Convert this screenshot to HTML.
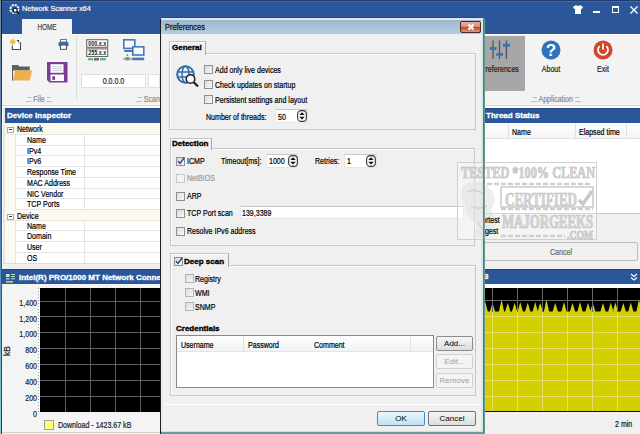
<!DOCTYPE html>
<html><head><meta charset="utf-8">
<style>
*{margin:0;padding:0;box-sizing:border-box}
html,body{width:640px;height:434px;overflow:hidden;background:#f0f0f0;font-family:"Liberation Sans",sans-serif;font-size:8px;color:#000;letter-spacing:0}
.a{position:absolute}
.t{position:absolute;white-space:nowrap;line-height:10px;font-size:8.5px;transform:scaleX(.83);transform-origin:0 0;-webkit-text-stroke:0.2px currentColor}
.c{transform-origin:50% 0}
.b{font-weight:bold}
.hdr{position:absolute;background:linear-gradient(#21457e 0 1px,#2b579a 1px);color:#fff;font-weight:bold;font-size:8px;white-space:nowrap;overflow:hidden;-webkit-text-stroke:0.3px #fff}
.cb{position:absolute;width:9px;height:9px;border:1px solid #8f8f8f;background:linear-gradient(135deg,#dcdcdc,#f7f7f7)}
.row{position:absolute;height:11px;border-bottom:1px solid #e3e3e3}
.btn{position:absolute;border:1px solid #a6a6a6;border-radius:2px;background:linear-gradient(#f6f6f6,#dddddd);text-align:center;line-height:13px}
.grp{position:absolute;border:1px solid #c8c8c8;box-shadow:1px 1px 0 #fff inset}
.tab{position:absolute;border:1px solid #c4c4c4;border-right-color:#a8a8a8;border-bottom:none;background:#f0f0f0;font-weight:bold;font-size:8px;box-shadow:inset 1px 1px 0 #fff;white-space:nowrap;-webkit-text-stroke:0.35px #000}
</style></head><body>

<!-- left app border -->
<div class="a" style="left:0;top:0;width:1px;height:434px;background:linear-gradient(#7d8a9a,#4a7ab0 50%,#8fd0da)"></div><div class="a" style="left:1px;top:0;width:1px;height:434px;background:linear-gradient(#121a3a,#2d5d9d 50%,#1c4650)"></div><div class="a" style="left:2px;top:35px;width:1px;height:399px;background:#fff"></div>

<!-- Title bar -->
<div class="a" style="left:2px;top:0;width:638px;height:34px;background:#2b579a"></div><div class="a" style="left:2px;top:0;width:638px;height:1px;background:#1f3a6e"></div><div class="a" style="left:2px;top:1px;width:638px;height:1px;background:#46679e"></div><div class="a" style="left:2px;top:6px;width:638px;height:1px;background:#2d5ba3"></div>
<div class="a" style="left:2px;top:34px;width:638px;height:1px;background:#fff"></div>
<svg class="a" style="left:9px;top:3px" width="12" height="12" viewBox="0 0 12 12"><circle cx="5.4" cy="6" r="4" fill="none" stroke="#e8f2ff" stroke-width="2" stroke-dasharray="2.2 0.9"/><circle cx="6.2" cy="7.3" r="2" fill="#fff" stroke="#111" stroke-width="1.1"/><line x1="7.7" y1="8.8" x2="10.5" y2="11" stroke="#111" stroke-width="1.3"/></svg>
<div class="t" style="left:22px;top:4px;color:#fff;font-size:8px;transform:scaleX(.9)">Network Scanner x64</div>
<!-- tshirt -->
<svg class="a" style="left:573px;top:5px" width="10" height="9" viewBox="0 0 10 9"><path d="M3 0 L0 2 L1 4 L2 3.5 L2 9 L8 9 L8 3.5 L9 4 L10 2 L7 0 Q5 2 3 0Z" fill="#fff"/></svg>
<div class="a" style="left:593px;top:11px;width:7px;height:2px;background:#fff"></div>
<div class="a" style="left:612px;top:6px;width:7px;height:7px;border:1px solid #fff;border-top-width:2px"></div>
<svg class="a" style="left:630px;top:6px" width="8" height="8" viewBox="0 0 8 8"><path d="M0.5 0.5L7.5 7.5M7.5 0.5L0.5 7.5" stroke="#fff" stroke-width="1.3"/></svg>

<!-- HOME tab -->
<div class="a" style="left:22px;top:19px;width:50px;height:16px;background:#f3f3f3"></div>
<div class="t c" style="left:22px;top:22px;width:50px;text-align:center;color:#444;transform:scaleX(.75)">HOME</div>

<!-- Ribbon -->
<div class="a" style="left:2px;top:35px;width:638px;height:71px;background:#f3f3f3;border-bottom:1px solid #d6d6d6"></div>
<div class="a" style="left:2px;top:106px;width:638px;height:2px;background:#fcfcfc"></div>
<div class="a" style="left:76px;top:36px;width:1px;height:64px;background:#dcdcdc"></div>
<div class="a" style="left:484px;top:36px;width:1px;height:64px;background:#dcdcdc"></div>

<!-- File group icons -->
<svg class="a" style="left:9px;top:38px" width="14" height="13" viewBox="0 0 14 13"><rect x="3.3" y="3" width="8.2" height="8.5" fill="#fff"/><path d="M3.3 7.5V11.5H11.5V4.2" fill="none" stroke="#4a4a4a" stroke-width="1.1"/><path d="M7.6 2h2.4v2.4Z" fill="#333"/><path d="M9 3.2l1.3 1.3" stroke="#333" stroke-width="1"/><circle cx="3.8" cy="3.8" r="2.6" fill="#f2c55a" opacity="0.9"/><path d="M1 3.8h5.6M3.8 1v5.6" stroke="#f7b733" stroke-width="1"/></svg>
<svg class="a" style="left:58px;top:39px" width="11" height="11" viewBox="0 0 11 11"><rect x="2.5" y="0.5" width="6" height="2.5" fill="#fff" stroke="#3f6fb0" stroke-width="0.9"/><rect x="0.5" y="3" width="10" height="4.2" rx="0.8" fill="#3f6fb0"/><rect x="2.5" y="6" width="6" height="4.3" fill="#fff" stroke="#444" stroke-width="0.9"/></svg>
<svg class="a" style="left:12px;top:64px" width="21" height="17" viewBox="0 0 21 17"><path d="M0.3 1 L6 1 L7.5 2.5 L17.8 2.5 L17.8 6.5 L0.3 6.5Z" fill="#606060"/><path d="M0.3 1 L0.3 16.5" stroke="#606060" stroke-width="1.6"/><path d="M3.2 6.5 L20.2 6.5 L17.6 16.5 L1 16.5Z" fill="#efb04a"/></svg>
<svg class="a" style="left:47px;top:62px" width="21" height="21" viewBox="0 0 21 21"><path d="M0 0 L20.5 0 L20.5 20.5 L2.5 20.5 L0 18Z" fill="#7b3c98"/><rect x="3.5" y="2.2" width="13" height="8.6" fill="#fff"/><path d="M5 4.6h10M5 6.6h10M5 8.6h10" stroke="#b9c3cf" stroke-width="0.8"/><rect x="3.5" y="12.5" width="13.5" height="6.5" fill="#fff"/><rect x="5.3" y="14.3" width="2.8" height="3.6" fill="#7b3c98"/></svg>
<div class="t c" style="left:18px;top:94px;width:42px;text-align:center;color:#8a8a8a">.:: File ::.</div>

<!-- Scan group -->
<svg class="a" style="left:86px;top:39px" width="23" height="22" viewBox="0 0 23 22"><rect x="0.7" y="0.7" width="21" height="7.6" fill="#fff" stroke="#6a6a6a" stroke-width="1.1"/><rect x="0.7" y="9.9" width="21" height="7.6" fill="#fff" stroke="#6a6a6a" stroke-width="1.1"/><text x="11.2" y="6.9" font-size="7" text-anchor="middle" font-family="Liberation Sans" font-weight="bold" fill="#222" textLength="18" lengthAdjust="spacingAndGlyphs">000.x.x</text><text x="11.2" y="16.1" font-size="7" text-anchor="middle" font-family="Liberation Sans" font-weight="bold" fill="#222" textLength="18" lengthAdjust="spacingAndGlyphs">255.x.x</text><path d="M2 20.2h5M14 20.2h6" stroke="#4cae7e" stroke-width="2"/><rect x="8" y="19" width="5" height="2.5" fill="#666"/></svg>
<svg class="a" style="left:122px;top:38px" width="24" height="24" viewBox="0 0 24 24"><rect x="1.8" y="1.8" width="11" height="8.6" fill="#f7faff" stroke="#4877b2" stroke-width="1.6"/><rect x="2.2" y="12" width="10.2" height="2" fill="#4877b2"/><rect x="10.8" y="8.8" width="11" height="8.2" fill="#f7faff" stroke="#4877b2" stroke-width="1.6"/><rect x="10.2" y="19.6" width="12" height="2.6" fill="#4877b2"/><path d="M1 21h9" stroke="#6f9a66" stroke-width="1"/><rect x="3.3" y="19" width="4.2" height="3.4" fill="#7d9770"/><circle cx="5.3" cy="17" r="0.9" fill="#6f9a66"/></svg>
<div class="a" style="left:81px;top:74px;width:65px;height:14px;background:#fff;border:1px solid #e0e0e0"></div>
<div class="t c" style="left:81px;top:76px;width:65px;text-align:center;color:#1a1a1a;-webkit-text-stroke:0.2px #1a1a1a">0.0.0.0</div>
<div class="a" style="left:148px;top:74px;width:12px;height:14px;background:#fff;border:1px solid #e0e0e0"></div>
<div class="t" style="left:136px;top:94px;color:#8a8a8a">.:: Scan</div>

<!-- Application group -->
<div class="a" style="left:485px;top:36px;width:40px;height:55px;background:#a7a7a7"></div>
<svg class="a" style="left:486px;top:40px" width="26" height="20" viewBox="0 0 26 20"><path d="M7 0.5v18.5M13.5 0.5v18.5M20.4 0.5v18.5" stroke="#4f5560" stroke-width="1.3"/><rect x="3.8" y="7" width="6.6" height="3" fill="#3a74b8"/><rect x="10.2" y="13" width="6.8" height="2.8" fill="#3a74b8"/><rect x="17" y="3.7" width="7" height="3" fill="#3a74b8"/></svg>
<div class="t" style="right:121px;top:64px;color:#222;transform-origin:100% 0">Preferences</div>
<svg class="a" style="left:541px;top:40px" width="20" height="20" viewBox="0 0 20 20"><circle cx="10" cy="10" r="9.5" fill="#2f73b8"/><text x="10" y="16" font-size="17" font-weight="bold" text-anchor="middle" font-family="Liberation Sans" fill="#fff">?</text></svg>
<div class="t c" style="left:536px;top:64px;width:30px;text-align:center;color:#222">About</div>
<svg class="a" style="left:593px;top:40px" width="20" height="20" viewBox="0 0 20 20"><circle cx="10" cy="10" r="9.5" fill="#d1472a"/><path d="M6.6 6.2 A5 5 0 1 0 13.4 6.2" fill="none" stroke="#fff" stroke-width="1.8"/><path d="M10 3.5v6" stroke="#fff" stroke-width="1.8"/></svg>
<div class="t c" style="left:588px;top:64px;width:30px;text-align:center;color:#222">Exit</div>
<div class="t" style="left:531px;top:94px;color:#8a8a8a">.:: Application ::.</div>


<!-- Device Inspector -->
<div class="a" style="left:3px;top:108px;width:158px;height:158px;background:#fff;border-left:2px solid #e6e6e6"></div>
<div class="hdr" style="left:5px;top:108px;width:156px;height:15px;line-height:15px;padding-left:2px">Device Inspector</div>
<div class="a" style="left:5px;top:123px;width:156px;height:12px;background:#fbf9f0;border-bottom:1px solid #e8e4d8"></div>
<div class="a" style="left:7px;top:127px;width:7px;height:6px;border:1px solid #a8a8a8;background:#fff"></div><div class="a" style="left:9px;top:129px;width:3px;height:1px;background:#333"></div>
<div class="t" style="left:17px;top:124px">Network</div>
<div class="a" style="left:5px;top:135px;width:10px;height:11px;background:#fbf9f0"></div>
<div class="a" style="left:15px;top:135px;width:146px;height:11px;border-bottom:1px solid #e4e4e4;border-left:1px solid #e4e4e4"></div>
<div class="a" style="left:84px;top:135px;width:1px;height:11px;background:#e4e4e4"></div>
<div class="t" style="left:27px;top:135px">Name</div>
<div class="a" style="left:5px;top:146px;width:10px;height:10px;background:#fbf9f0"></div>
<div class="a" style="left:15px;top:146px;width:146px;height:10px;border-bottom:1px solid #e4e4e4;border-left:1px solid #e4e4e4"></div>
<div class="a" style="left:84px;top:146px;width:1px;height:10px;background:#e4e4e4"></div>
<div class="t" style="left:27px;top:146px">IPv4</div>
<div class="a" style="left:5px;top:156px;width:10px;height:11px;background:#fbf9f0"></div>
<div class="a" style="left:15px;top:156px;width:146px;height:11px;border-bottom:1px solid #e4e4e4;border-left:1px solid #e4e4e4"></div>
<div class="a" style="left:84px;top:156px;width:1px;height:11px;background:#e4e4e4"></div>
<div class="t" style="left:27px;top:156px">IPv6</div>
<div class="a" style="left:5px;top:167px;width:10px;height:11px;background:#fbf9f0"></div>
<div class="a" style="left:15px;top:167px;width:146px;height:11px;border-bottom:1px solid #e4e4e4;border-left:1px solid #e4e4e4"></div>
<div class="a" style="left:84px;top:167px;width:1px;height:11px;background:#e4e4e4"></div>
<div class="t" style="left:27px;top:167px">Response Time</div>
<div class="a" style="left:5px;top:178px;width:10px;height:11px;background:#fbf9f0"></div>
<div class="a" style="left:15px;top:178px;width:146px;height:11px;border-bottom:1px solid #e4e4e4;border-left:1px solid #e4e4e4"></div>
<div class="a" style="left:84px;top:178px;width:1px;height:11px;background:#e4e4e4"></div>
<div class="t" style="left:27px;top:178px">MAC Address</div>
<div class="a" style="left:5px;top:189px;width:10px;height:10px;background:#fbf9f0"></div>
<div class="a" style="left:15px;top:189px;width:146px;height:10px;border-bottom:1px solid #e4e4e4;border-left:1px solid #e4e4e4"></div>
<div class="a" style="left:84px;top:189px;width:1px;height:10px;background:#e4e4e4"></div>
<div class="t" style="left:27px;top:189px">NIC Vendor</div>
<div class="a" style="left:5px;top:199px;width:10px;height:11px;background:#fbf9f0"></div>
<div class="a" style="left:15px;top:199px;width:146px;height:11px;border-bottom:1px solid #e4e4e4;border-left:1px solid #e4e4e4"></div>
<div class="a" style="left:84px;top:199px;width:1px;height:11px;background:#e4e4e4"></div>
<div class="t" style="left:27px;top:199px">TCP Ports</div>
<div class="a" style="left:5px;top:210px;width:156px;height:11px;background:#fbf9f0;border-bottom:1px solid #e8e4d8"></div>
<div class="a" style="left:7px;top:214px;width:7px;height:6px;border:1px solid #a8a8a8;background:#fff"></div><div class="a" style="left:9px;top:216px;width:3px;height:1px;background:#333"></div>
<div class="t" style="left:17px;top:211px">Device</div>
<div class="a" style="left:5px;top:221px;width:10px;height:10px;background:#fbf9f0"></div>
<div class="a" style="left:15px;top:221px;width:146px;height:10px;border-bottom:1px solid #e4e4e4;border-left:1px solid #e4e4e4"></div>
<div class="a" style="left:84px;top:221px;width:1px;height:10px;background:#e4e4e4"></div>
<div class="t" style="left:27px;top:221px">Name</div>
<div class="a" style="left:5px;top:231px;width:10px;height:11px;background:#fbf9f0"></div>
<div class="a" style="left:15px;top:231px;width:146px;height:11px;border-bottom:1px solid #e4e4e4;border-left:1px solid #e4e4e4"></div>
<div class="a" style="left:84px;top:231px;width:1px;height:11px;background:#e4e4e4"></div>
<div class="t" style="left:27px;top:231px">Domain</div>
<div class="a" style="left:5px;top:242px;width:10px;height:11px;background:#fbf9f0"></div>
<div class="a" style="left:15px;top:242px;width:146px;height:11px;border-bottom:1px solid #e4e4e4;border-left:1px solid #e4e4e4"></div>
<div class="a" style="left:84px;top:242px;width:1px;height:11px;background:#e4e4e4"></div>
<div class="t" style="left:27px;top:242px">User</div>
<div class="a" style="left:5px;top:253px;width:10px;height:11px;background:#fbf9f0"></div>
<div class="a" style="left:15px;top:253px;width:146px;height:11px;border-bottom:1px solid #e4e4e4;border-left:1px solid #e4e4e4"></div>
<div class="a" style="left:84px;top:253px;width:1px;height:11px;background:#e4e4e4"></div>
<div class="t" style="left:27px;top:253px">OS</div>
<div class="a" style="left:3px;top:263px;width:158px;height:5px;background:#f0f0f0;border-top:1px solid #dcdcdc"></div>
<!-- Graph left -->
<div class="hdr" style="left:2px;top:269px;width:159px;height:15px;line-height:17px;padding-left:17px">Intel(R) PRO/1000 MT Network Connection #3</div>
<svg class="a" style="left:5px;top:273px" width="11" height="10" viewBox="0 0 11 10"><rect x="1" y="1" width="3.5" height="3" fill="#cfeedd"/><rect x="1" y="5" width="3.5" height="1.5" fill="#9fd9b8"/><path d="M6 1.5h4M6 3.5h4M6 5.8h4" stroke="#b8e6c9" stroke-width="1.1"/><rect x="1" y="8" width="7" height="1.6" fill="#c9d35a"/></svg>
<div class="a" style="left:2px;top:284px;width:159px;height:150px;background:#f4f4f4"></div>
<div class="a" style="left:40px;top:288px;width:121px;height:124px;background:#000"></div>

<div class="a" style="left:40px;top:301px;width:121px;height:1px;background:#5c5c5c"></div>
<div class="a" style="left:40px;top:316px;width:121px;height:1px;background:#5c5c5c"></div>
<div class="a" style="left:40px;top:332px;width:121px;height:1px;background:#5c5c5c"></div>
<div class="a" style="left:40px;top:348px;width:121px;height:1px;background:#5c5c5c"></div>
<div class="a" style="left:40px;top:364px;width:121px;height:1px;background:#5c5c5c"></div>
<div class="a" style="left:40px;top:380px;width:121px;height:1px;background:#5c5c5c"></div>
<div class="a" style="left:40px;top:396px;width:121px;height:1px;background:#5c5c5c"></div>
<div class="a" style="left:65px;top:288px;width:1px;height:124px;background:#5c5c5c"></div>
<div class="a" style="left:90px;top:288px;width:1px;height:124px;background:#5c5c5c"></div>
<div class="a" style="left:115px;top:288px;width:1px;height:124px;background:#5c5c5c"></div>
<div class="a" style="left:140px;top:288px;width:1px;height:124px;background:#5c5c5c"></div>
<div class="t" style="left:0px;top:298px;width:37px;text-align:right;color:#222;transform-origin:100% 0">1,400</div>
<div class="t" style="left:0px;top:314px;width:37px;text-align:right;color:#222;transform-origin:100% 0">1,200</div>
<div class="t" style="left:0px;top:329px;width:37px;text-align:right;color:#222;transform-origin:100% 0">1,000</div>
<div class="t" style="left:0px;top:345px;width:37px;text-align:right;color:#222;transform-origin:100% 0">800</div>
<div class="t" style="left:0px;top:361px;width:37px;text-align:right;color:#222;transform-origin:100% 0">600</div>
<div class="t" style="left:0px;top:377px;width:37px;text-align:right;color:#222;transform-origin:100% 0">400</div>
<div class="t" style="left:0px;top:393px;width:37px;text-align:right;color:#222;transform-origin:100% 0">200</div>
<div class="t" style="left:0px;top:409px;width:37px;text-align:right;color:#222;transform-origin:100% 0">0</div>
<div class="a" style="left:38px;top:288px;width:2px;height:124px;background:#fafafa"></div><div class="a" style="left:38px;top:288px;width:1px;height:124px;background:repeating-linear-gradient(#9a9a9a 0 1px,transparent 1px 3px)"></div>
<div class="t" style="left:1px;top:346px;transform:rotate(-90deg);transform-origin:50% 50%;color:#222;line-height:10px;width:12px;text-align:center">kB</div>
<div class="a" style="left:44px;top:420px;width:10px;height:10px;background:#ffff7a;border:1px solid #a0a0a0"></div>
<div class="t" style="left:58px;top:420px;color:#222">Download - 1423.67 kB</div><div class="a" style="left:2px;top:432px;width:159px;height:1px;background:#cfcfcf"></div>


<!-- Thread Status -->
<div class="a" style="left:484px;top:108px;width:156px;height:158px;background:#fff"></div>
<div class="hdr" style="left:484px;top:108px;width:156px;height:15px;line-height:15px;padding-left:2px">Thread Status</div>
<div class="a" style="left:484px;top:123px;width:156px;height:16px;background:linear-gradient(#fff,#f4f4f4);border-bottom:1px solid #e2e2e2"></div>
<div class="a" style="left:508px;top:123px;width:1px;height:16px;background:#e2e2e2"></div>
<div class="a" style="left:575px;top:123px;width:1px;height:16px;background:#e2e2e2"></div>
<div class="a" style="left:626px;top:123px;width:1px;height:16px;background:#e2e2e2"></div>
<div class="t" style="left:512px;top:127px">Name</div>
<div class="t" style="left:579px;top:127px">Elapsed time</div>
<div class="a" style="left:484px;top:213px;width:156px;height:53px;background:#f0f0f0;border-top:1px solid #c8c8c8"></div>


<div class="btn" style="left:484px;top:242px;width:154px;height:19px;border-color:#bdbdbd;background:#f0f0f0"></div><div class="t c" style="left:484px;top:247px;width:154px;text-align:center;color:#6d6d6d">Cancel</div>
<div class="a" style="left:484px;top:266px;width:156px;height:3px;background:#f0f0f0"></div>
<!-- Graph right -->
<div class="hdr" style="left:484px;top:269px;width:156px;height:15px;line-height:15px;padding-left:0px">3</div>
<svg class="a" style="left:630px;top:273px" width="8" height="8" viewBox="0 0 8 8"><path d="M1 1l3 2.5l3-2.5M1 4.5l3 2.5l3-2.5" fill="none" stroke="#fff" stroke-width="1.1"/></svg>
<div class="a" style="left:484px;top:284px;width:156px;height:150px;background:linear-gradient(#fff 0 4px,#f0f0f0 4px)"></div>

<svg class="a" style="left:484px;top:288px" width="156" height="124" viewBox="0 0 156 124"><rect width="156" height="124" fill="#d4cf00"/><path d="M0 0 L0 12 L-1.35 23.50 L1.25 14.00 L3.85 23.50 L5.90 23.50 L8.50 14.75 L11.10 23.50 L14.90 23.50 L17.50 11.60 L20.10 23.50 L21.15 23.50 L23.75 14.75 L26.35 23.50 L28.00 23.50 L30.60 14.75 L33.20 23.50 L33.65 23.50 L36.25 14.00 L38.85 23.50 L41.15 23.50 L43.75 14.75 L46.35 23.50 L48.65 23.50 L51.25 14.00 L53.85 23.50 L53.65 23.50 L56.25 14.75 L58.85 23.50 L59.90 23.50 L62.50 11.60 L65.10 23.50 L68.65 23.50 L71.25 14.75 L73.85 23.50 L77.40 23.50 L80.00 14.00 L82.60 23.50 L85.90 23.50 L88.50 14.75 L91.10 23.50 L93.40 23.50 L96.00 14.00 L98.60 23.50 L101.40 23.50 L104.00 14.75 L106.60 23.50 L106.15 23.50 L108.75 15.00 L111.35 23.50 L116.40 23.50 L119.00 15.00 L121.60 23.50 L124.20 23.50 L126.80 14.50 L129.40 23.50 L128.80 23.50 L131.40 14.50 L134.00 23.50 L136.70 23.50 L139.30 15.00 L141.90 23.50 L144.20 23.50 L146.80 14.50 L149.40 23.50 L152.40 23.50 L155.00 11.00 L157.60 23.50 L156 10 L156 0 Z" fill="#000"/><path d="M8.5 0v24.0" stroke="#6a6a6a"/><path d="M8.5 24.0V123" stroke="#e8e26a" stroke-width="1"/><path d="M33.5 0v24.0" stroke="#6a6a6a"/><path d="M33.5 24.0V123" stroke="#e8e26a" stroke-width="1"/><path d="M58.5 0v24.0" stroke="#6a6a6a"/><path d="M58.5 24.0V123" stroke="#e8e26a" stroke-width="1"/><path d="M83.5 0v24.0" stroke="#6a6a6a"/><path d="M83.5 24.0V123" stroke="#e8e26a" stroke-width="1"/><path d="M108.5 0v24.0" stroke="#6a6a6a"/><path d="M108.5 24.0V123" stroke="#e8e26a" stroke-width="1"/><path d="M133.5 0v24.0" stroke="#6a6a6a"/><path d="M133.5 24.0V123" stroke="#e8e26a" stroke-width="1"/><path d="M0 12.5h156" stroke="#6a6a6a"/><path d="M0 28.5h156" stroke="#e8e26a"/><path d="M0 44.5h156" stroke="#e8e26a"/><path d="M0 60.5h156" stroke="#e8e26a"/><path d="M0 76.5h156" stroke="#e8e26a"/><path d="M0 92.5h156" stroke="#e8e26a"/><path d="M0 108.5h156" stroke="#e8e26a"/><path d="M0 123.5h156" stroke="#111"/></svg>
<div class="t" style="left:615px;top:419px;color:#111">2 min</div>


<!-- ===== Preferences dialog ===== -->
<div class="a" style="left:160px;top:17px;width:325px;height:417px;background:#f0f0f0;border-radius:5px 5px 0 0"></div>
<div class="a" style="left:161px;top:17px;width:322px;height:1px;background:#3a4658;border-radius:3px 3px 0 0"></div>
<div class="a" style="left:160px;top:19px;width:1px;height:415px;background:#1c1c1c"></div>
<div class="a" style="left:161px;top:18px;width:322px;height:2px;background:#dfe7f0"></div>
<div class="a" style="left:161px;top:20px;width:322px;height:14px;background:linear-gradient(#9db6cf,#b6cde1)"></div>
<div class="a" style="left:161px;top:34px;width:322px;height:1px;background:#e8eff7"></div>
<div class="a" style="left:161px;top:35px;width:2px;height:399px;background:#e9ebef"></div>
<div class="a" style="left:481px;top:20px;width:2px;height:412px;background:#cdeee9"></div>
<div class="a" style="left:483px;top:19px;width:2px;height:415px;background:linear-gradient(90deg,#3e6d6a,#7fa4a0)"></div>
<div class="a" style="left:161px;top:431px;width:322px;height:1px;background:#bfe6ec"></div>
<div class="a" style="left:161px;top:432px;width:324px;height:2px;background:#5e9ca8"></div>
<div class="t" style="left:165px;top:22px;font-size:8.5px;color:#151c28;transform:scaleX(.87);-webkit-text-stroke:0.3px #151c28">Preferences</div>
<div class="a" style="left:460px;top:21px;width:21px;height:12px;border:1px solid #4e2626;border-radius:2px;background:linear-gradient(#eab0a2 0%,#dc8c78 45%,#c8472c 55%,#dc9480 100%)"></div>
<svg class="a" style="left:466px;top:22px" width="10" height="10" viewBox="0 0 10 10"><path d="M2.5 2.5L7.5 7.5M7.5 2.5L2.5 7.5" stroke="#fff" stroke-width="2.2"/></svg>

<!-- General -->
<div class="grp" style="left:169px;top:53px;width:307px;height:77px"></div>
<div class="tab" style="left:169px;top:41px;width:37px;height:14px;line-height:11px;padding-left:2px">General</div>
<svg class="a" style="left:176px;top:65px" width="23" height="22" viewBox="0 0 23 22"><circle cx="9.5" cy="9.5" r="8.3" fill="none" stroke="#2f6db0" stroke-width="2"/><ellipse cx="9.5" cy="9.5" rx="3.5" ry="8.3" fill="none" stroke="#2f6db0" stroke-width="1.5"/><path d="M1.5 7h16M1.5 12h16" stroke="#2f6db0" stroke-width="1.5"/><circle cx="14.5" cy="14" r="4.3" fill="#fff" stroke="#222" stroke-width="1.6"/><path d="M17.5 17L22 21.5" stroke="#222" stroke-width="2.2"/></svg>
<div class="cb" style="left:204px;top:65px"></div><div class="t" style="left:215px;top:65px">Add only live devices</div>
<div class="cb" style="left:204px;top:80px"></div><div class="t" style="left:215px;top:80px">Check updates on startup</div>
<div class="cb" style="left:204px;top:95px"></div><div class="t" style="left:215px;top:95px">Persistent settings and layout</div>
<div class="t" style="left:206px;top:112px">Number of threads:</div>
<div class="a" style="left:275px;top:109px;width:33px;height:14px;background:#fff;border:1px solid #e6e6e6;border-top-color:#c6c6c6"></div>
<div class="t" style="left:278px;top:112px">50</div>
<svg class="a" style="left:297px;top:110px" width="10" height="12" viewBox="0 0 10 12"><rect x="0.6" y="0.6" width="8.8" height="10.8" rx="3.5" fill="#f6f6f6" stroke="#3a3a3a" stroke-width="1.1"/><path d="M5 5.6h-0.01" stroke="#888"/><path d="M2.3 5L5 2.2L7.7 5Z M2.3 6.8L5 9.6L7.7 6.8Z" fill="#111"/></svg>

<!-- Detection -->
<div class="grp" style="left:170px;top:148px;width:305px;height:98px"></div>
<div class="tab" style="left:170px;top:138px;width:42px;height:12px;line-height:9px;padding-left:1px">Detection</div>
<div class="cb" style="left:176px;top:157px"></div>
<svg class="a" style="left:177px;top:157px" width="8" height="8" viewBox="0 0 8 8"><path d="M1 4L3 6.5L7 1" fill="none" stroke="#1f3f8f" stroke-width="1.3"/></svg>
<div class="t" style="left:187px;top:156px">ICMP</div>
<div class="t" style="left:221px;top:156px">Timeout[ms]:</div>
<div class="a" style="left:266px;top:154px;width:32px;height:14px;background:#fff;border:1px solid #e6e6e6;border-top-color:#c6c6c6"></div>
<div class="t" style="left:269px;top:156px">1000</div>
<svg class="a" style="left:288px;top:155px" width="10" height="12" viewBox="0 0 10 12"><rect x="0.6" y="0.6" width="8.8" height="10.8" rx="3.5" fill="#f6f6f6" stroke="#3a3a3a" stroke-width="1.1"/><path d="M5 5.6h-0.01" stroke="#888"/><path d="M2.3 5L5 2.2L7.7 5Z M2.3 6.8L5 9.6L7.7 6.8Z" fill="#111"/></svg>
<div class="t" style="left:315px;top:156px">Retries:</div>
<div class="a" style="left:344px;top:154px;width:33px;height:14px;background:#fff;border:1px solid #e6e6e6;border-top-color:#c6c6c6"></div>
<div class="t" style="left:347px;top:156px">1</div>
<svg class="a" style="left:366px;top:155px" width="10" height="12" viewBox="0 0 10 12"><rect x="0.6" y="0.6" width="8.8" height="10.8" rx="3.5" fill="#f6f6f6" stroke="#3a3a3a" stroke-width="1.1"/><path d="M5 5.6h-0.01" stroke="#888"/><path d="M2.3 5L5 2.2L7.7 5Z M2.3 6.8L5 9.6L7.7 6.8Z" fill="#111"/></svg>
<div class="cb" style="left:176px;top:174px;border-color:#c8c8c8;background:#f3f3f3"></div><div class="t" style="left:187px;top:173px;color:#9a9a9a">NetBIOS</div>
<div class="cb" style="left:176px;top:192px"></div><div class="t" style="left:187px;top:191px">ARP</div>
<div class="cb" style="left:176px;top:209px"></div><div class="t" style="left:187px;top:208px">TCP Port scan</div>
<div class="a" style="left:240px;top:206px;width:224px;height:13px;background:#fff;border:1px solid #e6e6e6;border-top-color:#c6c6c6"></div>
<div class="t" style="left:242px;top:208px">139,3389</div>
<div class="cb" style="left:176px;top:227px"></div><div class="t" style="left:187px;top:226px">Resolve IPv6 address</div>

<!-- Deep scan -->
<div class="grp" style="left:170px;top:265px;width:306px;height:131px"></div>
<div class="tab" style="left:170px;top:253px;width:59px;height:14px;line-height:15px;padding-left:13px">Deep scan</div>
<div class="cb" style="left:174px;top:257px"></div>
<svg class="a" style="left:175px;top:257px" width="8" height="8" viewBox="0 0 8 8"><path d="M1 4L3 6.5L7 1" fill="none" stroke="#1f3f8f" stroke-width="1.3"/></svg>
<div class="cb" style="left:185px;top:274px;border-color:#b4b4b4"></div><div class="t" style="left:195px;top:274px">Registry</div>
<div class="cb" style="left:185px;top:288px;border-color:#b4b4b4"></div><div class="t" style="left:195px;top:288px">WMI</div>
<div class="cb" style="left:185px;top:302px;border-color:#b4b4b4"></div><div class="t" style="left:195px;top:302px">SNMP</div>
<div class="a b" style="left:176px;top:324px;font-size:8px;line-height:10px;-webkit-text-stroke:0.35px #000">Credentials</div>
<div class="a" style="left:176px;top:335px;width:258px;height:53px;background:#fff;border:1px solid #8a8a8a"></div>
<div class="a" style="left:177px;top:336px;width:256px;height:16px;background:linear-gradient(#fff,#f1f2f4);border-bottom:1px solid #e4e4e4"></div>
<div class="a" style="left:243px;top:336px;width:1px;height:16px;background:#e2e2e2"></div>
<div class="a" style="left:410px;top:336px;width:1px;height:16px;background:#e2e2e2"></div>
<div class="t" style="left:181px;top:340px">Username</div>
<div class="t" style="left:248px;top:340px">Password</div>
<div class="t" style="left:314px;top:340px">Comment</div>
<div class="btn" style="left:436px;top:336px;width:37px;height:15px;border-color:#8c8c8c">Add...</div>
<div class="btn" style="left:436px;top:354px;width:37px;height:15px;color:#a0a0a0;border-color:#d0d0d0;background:#f4f4f4">Edit...</div>
<div class="btn" style="left:436px;top:373px;width:37px;height:15px;color:#a0a0a0;border-color:#d0d0d0;background:#f4f4f4">Remove</div>

<div class="a" style="left:164px;top:404px;width:317px;height:1px;background:#d5d5d5;border-bottom:1px solid #fff"></div>
<div class="btn" style="left:377px;top:411px;width:48px;height:15px;border-color:#3c90c8;background:linear-gradient(#eaf6fd,#c0e2f5)">OK</div>
<div class="btn" style="left:428px;top:411px;width:48px;height:15px;border-color:#707070">Cancel</div>


<!-- watermark -->
<svg class="a" style="left:457px;top:162px" width="140" height="78" viewBox="0 0 140 78">
<rect x="0.5" y="0.5" width="139" height="77" fill="#fff" fill-opacity="0.25" stroke="#d0d0d0" stroke-width="1"/>
<path d="M6 24 Q16 16 28 22 L36 30 Q40 40 34 48 L40 62 L30 76 L16 76 L20 62 Q8 56 8 44 Q2 36 6 24Z" fill="#dedede" opacity="0.5"/>
<path d="M10 30 Q18 26 26 32 M14 44 Q22 48 30 44 M20 60 L28 70" fill="none" stroke="#cdcdcd" stroke-width="1.6" opacity="0.8"/>
<g fill="#d6d6d6" stroke="#c2c2c2" stroke-width="0.7" font-family="Liberation Serif" font-weight="bold">
<text x="4" y="16" font-size="16.5" textLength="134" lengthAdjust="spacingAndGlyphs">TESTED *100% CLEAN</text>
<text x="48" y="44" font-size="19" textLength="72" lengthAdjust="spacingAndGlyphs">CERTIFIED</text>
<text x="45" y="66" font-size="18" textLength="91" lengthAdjust="spacingAndGlyphs">MAJORGEEKS</text>
<text x="110" y="77" font-size="12" textLength="26" lengthAdjust="spacingAndGlyphs">.COM</text>
</g>
<path d="M30 22h104M44 47h92M44 74h64" stroke="#cfcfcf" stroke-width="2.5" stroke-dasharray="5 2"/>
<rect x="44" y="25" width="92" height="20" fill="none" stroke="#cacaca" stroke-width="1.5"/>
<path d="M122 38l4 4l9-13" fill="none" stroke="#c8c8c8" stroke-width="3.5"/>
</svg>
<div class="a" style="left:485px;top:214px;width:40px;height:26px;overflow:hidden"><div class="t" style="right:25px;top:1px;transform-origin:100% 0">Shortest</div><div class="t" style="right:27px;top:12px;transform-origin:100% 0">Longest</div></div>
<div class="a" style="left:483px;top:162px;width:2px;height:78px;background:linear-gradient(90deg,#3e6d6a,#7fa4a0);opacity:.8"></div>
</body></html>
